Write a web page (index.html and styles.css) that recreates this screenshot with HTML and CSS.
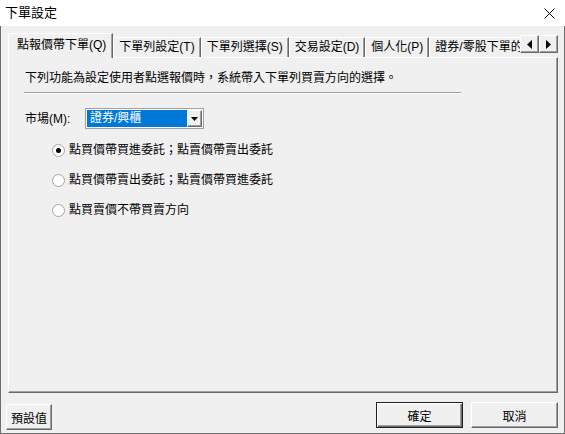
FILE: index.html
```html
<!DOCTYPE html>
<html lang="zh-Hant">
<head>
<meta charset="utf-8">
<title>下單設定</title>
<link rel="stylesheet" href="styles.css">
</head>
<body>
<div class="window">
  <div class="titlebar">
    <span class="title">下單設定</span>
    <svg class="close" width="11" height="11" viewBox="0 0 11 11"><path d="M0.5 0.5 L10.5 10.5 M10.5 0.5 L0.5 10.5" stroke="#000" stroke-width="1" fill="none"/></svg>
  </div>
  <div class="client">
    <div class="tabstrip">
      <div class="tabs">
        <div class="tab active">點報價帶下單(Q)</div>
        <div class="tab">下單列設定(T)</div>
        <div class="tab">下單列選擇(S)</div>
        <div class="tab">交易設定(D)</div>
        <div class="tab">個人化(P)</div>
        <div class="tab">證券/零股下單的設定</div>
      </div>
      <div class="spin">
        <div class="spinbtn"><svg width="5" height="9" viewBox="0 0 5 9"><path d="M5 0 L0 4.5 L5 9 Z" fill="#000"/></svg></div>
        <div class="spinbtn"><svg width="5" height="9" viewBox="0 0 5 9"><path d="M0 0 L5 4.5 L0 9 Z" fill="#000"/></svg></div>
      </div>
    </div>
    <div class="panel">
      <p class="desc">下列功能為設定使用者點選報價時，系統帶入下單列買賣方向的選擇。</p>
      <div class="divider"></div>
      <div class="market">
        <span class="label">市場(M):</span>
        <div class="combo">
          <span class="combo-value">證券/興櫃</span>
          <span class="combo-btn"><svg width="7" height="4" viewBox="0 0 7 4"><path d="M0 0 L7 0 L3.5 4 Z" fill="#000"/></svg></span>
        </div>
      </div>
      <div class="options">
        <div class="option"><span class="radio checked"></span><span>點買價帶買進委託；點賣價帶賣出委託</span></div>
        <div class="option"><span class="radio"></span><span>點買價帶賣出委託；點賣價帶買進委託</span></div>
        <div class="option"><span class="radio"></span><span>點買賣價不帶買賣方向</span></div>
      </div>
    </div>
    <div class="footer">
      <button class="btn btn-defaults">預設值</button>
      <div class="spacer"></div>
      <button class="btn btn-wide btn-primary">確定</button>
      <button class="btn btn-wide">取消</button>
    </div>
  </div>
</div>
</body>
</html>
```

FILE: styles.css
```css
* { box-sizing: border-box; }
html, body { margin: 0; padding: 0; }
body {
  width: 565px;
  height: 434px;
  overflow: hidden;
  font-family: "Liberation Sans", "Noto Sans CJK TC", sans-serif;
  font-size: 12px;
  color: #000;
  background: #f0f0f0;
}
.window {
  width: 565px;
  height: 434px;
  display: flex;
  flex-direction: column;
  background: #f0f0f0;
}
.titlebar {
  height: 26px;
  flex: none;
  background: #fff;
  display: flex;
  align-items: center;
  justify-content: space-between;
  padding: 0 10px 0 5px;
}
.title { font-size: 13px; line-height: 16px; }
.close { display: block; }

.client {
  flex: 1;
  display: flex;
  flex-direction: column;
  padding-top: 7px;
  border: 1px solid #6e6e6e;
  border-top: none;
}
.tabstrip {
  position: relative;
  z-index: 1;
  height: 25px;
  margin: 0 6px 0 7px;
  display: flex;
  align-items: flex-start;
}
.tabs {
  flex: 1;
  height: 25px;
  display: flex;
  align-items: flex-end;
  overflow: hidden;
}
.tab {
  flex: none;
  height: 20px;
  margin-bottom: 1px;
  padding: 0 5px;
  line-height: 18px;
  white-space: nowrap;
  background: #f0f0f0;
  border-top: 1px solid #fff;
  border-left: 1px solid #fff;
  border-right: 1px solid #696969;
  box-shadow: inset -1px 0 #a0a0a0;
}
.tab.active {
  height: 25px;
  margin-bottom: 0;
  padding: 0 6px 0 8px;
  line-height: 22px;
}
.spin {
  flex: none;
  display: flex;
  margin-top: 2px;
}
.spinbtn {
  width: 19px;
  height: 18px;
  display: flex;
  align-items: center;
  justify-content: center;
  background: #f0f0f0;
  border: 1px solid;
  border-color: #fff #696969 #696969 #fff;
  box-shadow: inset -1px -1px #a0a0a0;
}
.spinbtn svg { display: block; }

.panel {
  height: 336px;
  margin: -1px 6px 0 7px;
  padding: 12px 0 0 16px;
  border: 1px solid;
  border-color: #fff #696969 #696969 #fff;
  box-shadow: inset -1px -1px #a0a0a0;
}
.desc {
  margin: 0;
  line-height: 16px;
  white-space: nowrap;
}
.divider {
  width: 437px;
  height: 2px;
  margin: 6px 0 0 -1px;
  border-top: 1px solid #a0a0a0;
  border-bottom: 1px solid #fff;
}
.market {
  margin-top: 14px;
  display: flex;
  align-items: center;
  height: 21px;
}
.label { width: 60px; line-height: 16px; }
.combo {
  width: 119px;
  height: 21px;
  display: flex;
  padding: 1px;
  background: #fff;
  border: 1px solid #a0a0a0;
}
.combo-value {
  flex: 1;
  background: #0078d7;
  color: #fff;
  line-height: 17px;
  padding-left: 3px;
}
.combo-btn {
  width: 15px;
  display: flex;
  align-items: center;
  justify-content: center;
  background: #f0f0f0;
  border: 1px solid;
  border-color: #fff #696969 #696969 #fff;
  box-shadow: inset -1px -1px #a0a0a0;
}
.combo-btn svg { display: block; }

.options {
  margin-top: 13px;
  padding-left: 27px;
  display: flex;
  flex-direction: column;
  gap: 14px;
}
.option {
  height: 16px;
  display: flex;
  align-items: center;
  line-height: 16px;
  white-space: nowrap;
}
.radio {
  flex: none;
  width: 13px;
  height: 13px;
  margin-right: 4px;
  border-radius: 50%;
  background: #fff;
  border: 1px solid #a6a6a6;
  display: flex;
  align-items: center;
  justify-content: center;
}
.radio.checked::after {
  content: "";
  width: 5px;
  height: 5px;
  border-radius: 50%;
  background: #000;
}

.footer {
  margin-top: 9px;
  padding: 0 6px 0 5px;
  display: flex;
  gap: 8px;
}
.spacer { flex: 1; }
.btn {
  height: 26px;
  padding: 0;
  font: inherit;
  color: #000;
  background: #f0f0f0;
  border: 1px solid;
  border-color: #fff #696969 #696969 #fff;
  box-shadow: inset -1px -1px #a0a0a0;
}
.btn-defaults { width: 46px; margin-top: 2px; }
.btn-wide { width: 87px; }
.btn-primary {
  border: 1px solid #202020;
  box-shadow: inset 1px 1px #fff, inset -1px -1px #696969, inset -2px -2px #a0a0a0;
}
```
